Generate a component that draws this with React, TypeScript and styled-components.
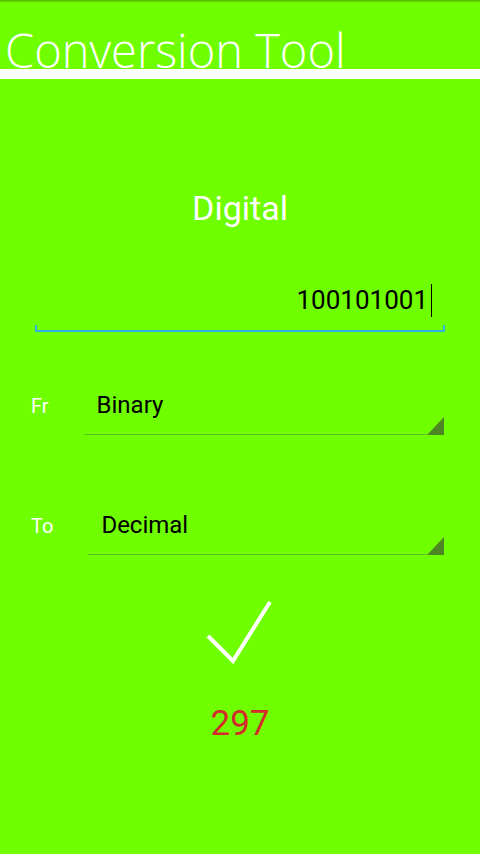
import { FC } from 'react'
import styled, { createGlobalStyle } from 'styled-components'

const GlobalStyle = createGlobalStyle`
  html, body {
    margin: 0;
    padding: 0;
    background: #6fff00;
  }
  * {
    box-sizing: border-box;
  }
`

const Screen = styled.div`
  width: 480px;
  min-height: 854px;
  display: flex;
  flex-direction: column;
  background: linear-gradient(to bottom, #55b400 0px, #6fff00 3px);
  font-family: Roboto, 'Noto Sans', sans-serif;
  overflow: hidden;
`

// the title runs under the white bar, so its foot is clipped like on the device
const Header = styled.div`
  height: 69px;
  padding: 26px 0 0 5px;
  overflow: hidden;
`

const Title = styled.h1`
  margin: 0;
  font-family: 'Open Sans', 'Noto Sans', sans-serif;
  font-weight: 300;
  font-size: 47px;
  line-height: 48px;
  color: #fff;
  white-space: nowrap;
`

const Bar = styled.div`
  height: 10px;
  background: #fff;
`

const Heading = styled.h2`
  margin: 109px 0 0;
  font-weight: 400;
  font-size: 34px;
  line-height: 40px;
  color: #fff;
  text-align: center;
`

const InputField = styled.div`
  margin: 55px 35px 0;
`

const InputText = styled.div`
  display: flex;
  justify-content: flex-end;
  align-items: center;
  padding-right: 13px;
  font-size: 26px;
  line-height: 34px;
  color: #000;
`

const Caret = styled.span`
  width: 1px;
  height: 33px;
  margin-left: 3px;
  background: #000;
`

const InputLine = styled.div`
  height: 7px;
  margin-top: 8px;
  border: 2px solid #2fb0e6;
  border-top: none;
`

const SpinnerRow = styled.div<{ $gap: number }>`
  display: flex;
  align-items: baseline;
  gap: 35px;
  margin-top: ${({ $gap }) => $gap}px;
  padding: 0 36px 0 31px;
`

const Label = styled.span`
  font-size: 20px;
  color: #fff;
`

const Spinner = styled.div`
  flex: 1;
  display: flex;
  align-items: flex-end;
  padding-left: 13px;
  border-bottom: 1px solid #58c01a;
`

const SpinnerText = styled.span`
  flex: 1;
  padding-bottom: 15px;
  font-size: 24px;
  line-height: 28px;
  color: #000;
`

const Corner = styled.svg`
  display: block;
  margin-bottom: -1px;
`

const CheckButton = styled.button`
  align-self: center;
  margin-top: 43px;
  padding: 0;
  border: none;
  background: none;
  cursor: pointer;
  svg {
    display: block;
  }
`

const Result = styled.div`
  margin-top: 39px;
  font-size: 35px;
  line-height: 42px;
  color: #d42a2a;
  text-align: center;
`

const DropCorner: FC = () => (
  <Corner width="17" height="18" viewBox="0 0 17 18">
    <polygon points="17,0 17,18 0,18" fill="#4d8424" />
  </Corner>
)

const Select: FC<{ label: string; value: string; gap: number }> = ({ label, value, gap }) => (
  <SpinnerRow $gap={gap}>
    <Label>{label}</Label>
    <Spinner>
      <SpinnerText>{value}</SpinnerText>
      <DropCorner />
    </Spinner>
  </SpinnerRow>
)

const App: FC = () => (
  <>
    <GlobalStyle />
    <Screen>
      <Header>
        <Title>Conversion Tool</Title>
      </Header>
      <Bar />
      <Heading>Digital</Heading>
      <InputField>
        <InputText>
          100101001
          <Caret />
        </InputText>
        <InputLine />
      </InputField>
      <Select label="Fr" value="Binary" gap={59} />
      <Select label="To" value="Decimal" gap={76} />
      <CheckButton aria-label="Convert">
        <svg width="70" height="66" viewBox="0 0 70 66">
          <polyline points="3,38 28,63 65,4" fill="none" stroke="#fff" strokeWidth="4" />
        </svg>
      </CheckButton>
      <Result>297</Result>
    </Screen>
  </>
)

export default App
